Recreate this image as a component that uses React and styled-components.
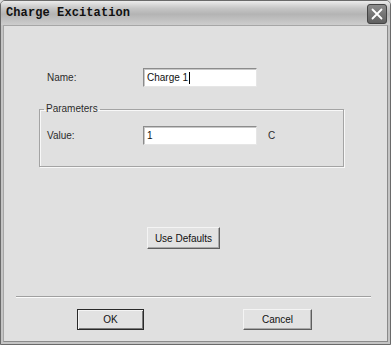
import React from "react";
import styled, { createGlobalStyle } from "styled-components";

const Global = createGlobalStyle`
  html, body { margin: 0; padding: 0; background: #dedede; }
  * { box-sizing: border-box; }
`;

const Window = styled.div`
  width: 391px;
  height: 345px;
  display: flex;
  flex-direction: column;
  border: 1px solid #6a6a6a;
  border-radius: 5px 5px 0 0;
  background: #c4c4c4;
  overflow: hidden;
  font-family: "Liberation Sans", Arial, sans-serif;
`;

const TitleBar = styled.div`
  height: 24px;
  flex: none;
  display: flex;
  align-items: center;
  justify-content: space-between;
  padding: 0 3px 0 5px;
  background: linear-gradient(to bottom, #ececec 0%, #c6c6c6 30%, #b4b4b4 55%, #cdcdcd 100%);
`;

const Title = styled.div`
  font-family: "Liberation Mono", "Courier New", monospace;
  font-weight: bold;
  font-size: 12px;
  color: #111;
  letter-spacing: 0.1px;
`;

const CloseButton = styled.div`
  width: 20px;
  height: 20px;
  margin-top: 2px;
  border-radius: 3px;
  border: 1px solid #444444;
  background-color: #686868;
  background-image: linear-gradient(to bottom, #8c8c8c, #606060);
  display: flex;
  align-items: center;
  justify-content: center;
`;

const Frame = styled.div`
  flex: 1;
  display: flex;
  padding: 0 2px 2px 2px;
`;

const Client = styled.div`
  flex: 1;
  display: flex;
  flex-direction: column;
  align-items: flex-start;
  background: #e0e0e0;
  border: 1px solid #a6a6a6;
  border-right-color: #8a8a8a;
  border-bottom-color: #8a8a8a;
  padding-left: 35px;
`;

const Row = styled.div`
  display: grid;
  grid-template-columns: 96px 114px auto;
  align-items: center;
  margin-top: ${(p) => p.$top || 0}px;
  padding-left: ${(p) => p.$indent || 0}px;
`;

const Label = styled.span`
  font-size: 10px;
  color: #2c2c2c;
  margin-left: ${(p) => p.$gap || 0}px;
`;

const TextInput = styled.div`
  height: 19px;
  width: 114px;
  background: #fff;
  border: 1px solid #8c8c8c;
  border-right-color: #e6e6e6;
  border-bottom-color: #e6e6e6;
  box-shadow: inset 1px 1px 0 #c8c8c8;
  font-size: 10px;
  color: #111;
  padding: 0 3px;
  display: flex;
  align-items: center;
`;

const Caret = styled.span`
  display: inline-block;
  width: 1px;
  height: 12px;
  background: #000;
  margin-left: 1px;
`;

const GroupBox = styled.fieldset`
  margin: 16px 0 0 0;
  width: 305px;
  padding: 11px 7px 21px 7px;
  border: 1px solid #a4a4a4;
  box-shadow: 1px 1px 0 #f8f8f8, inset 1px 1px 0 #f8f8f8;
  min-inline-size: 0;
`;

const Legend = styled.legend`
  font-size: 10px;
  line-height: 12px;
  color: #2c2c2c;
  padding: 0 2px;
  margin-left: -3px;
`;

const Button = styled.div`
  width: ${(p) => p.$w}px;
  height: ${(p) => p.$h || 22}px;
  display: flex;
  align-items: center;
  justify-content: center;
  font-size: 10px;
  color: #111;
  background: #e2e2e2;
  border: 1px solid ${(p) => (p.$default ? "#2a2a2a" : "#f4f4f4")};
  border-right-color: ${(p) => (p.$default ? "#2a2a2a" : "#5e5e5e")};
  border-bottom-color: ${(p) => (p.$default ? "#2a2a2a" : "#5e5e5e")};
  box-shadow: ${(p) =>
    p.$default
      ? "inset 1px 1px 0 #f4f4f4, inset -1px -1px 0 #7a7a7a"
      : "inset -1px -1px 0 #a8a8a8"};
  margin-top: ${(p) => p.$top || 0}px;
  margin-left: ${(p) => p.$left || 0}px;
`;

const Separator = styled.div`
  width: 355px;
  height: 2px;
  margin-top: 47px;
  margin-left: -23px;
  border-top: 1px solid #a0a0a0;
  border-bottom: 1px solid #fbfbfb;
`;

const ButtonRow = styled.div`
  display: flex;
  gap: 99px;
  margin-top: 11px;
  margin-left: 38px;
`;

export default function App() {
  return (
    <>
      <Global />
      <Window>
        <TitleBar>
          <Title>Charge Excitation</Title>
          <CloseButton>
            <svg width="14" height="14" viewBox="0 0 14 14">
              <path d="M2.5 2.5 L11.5 11.5 M11.5 2.5 L2.5 11.5" stroke="#ffffff" strokeWidth="1.8" strokeLinecap="round" />
            </svg>
          </CloseButton>
        </TitleBar>
        <Frame>
          <Client>
            <Row $top={42} $indent={8}>
              <Label>Name:</Label>
              <TextInput>
                Charge 1<Caret />
              </TextInput>
            </Row>
            <GroupBox>
              <Legend>Parameters</Legend>
              <Row>
                <Label>Value:</Label>
                <TextInput>1</TextInput>
                <Label $gap={11}>C</Label>
              </Row>
            </GroupBox>
            <Button $w={73} $h={22} $top={60} $left={108}>Use Defaults</Button>
            <Separator />
            <ButtonRow>
              <Button $w={67} $h={21} $default>OK</Button>
              <Button $w={69} $h={21}>Cancel</Button>
            </ButtonRow>
          </Client>
        </Frame>
      </Window>
    </>
  );
}
